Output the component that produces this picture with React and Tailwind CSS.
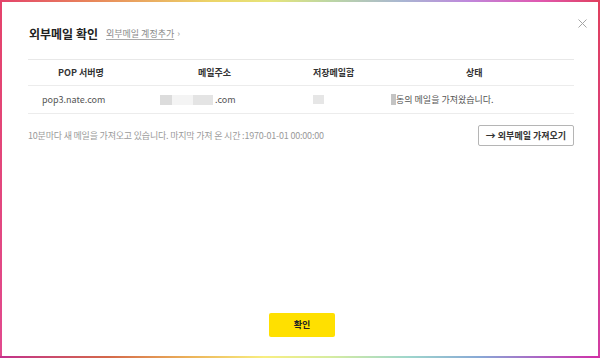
import React from "react";

export default function App() {
  const font = { fontFamily: '"Noto Sans CJK KR", "Noto Sans", sans-serif' };
  return (
    <div className="w-[600px] h-[358px] flex flex-col bg-white" style={font}>
      <div className="h-[2px] w-full bg-[linear-gradient(90deg,#e4436b_0%,#e8855a_15%,#ecd468_35%,#e6e47a_45%,#bcd6a4_55%,#a9b6d2_67%,#bf88dc_78%,#e058b0_90%,#e0405e_100%)]" />
      <div className="flex-1 flex min-h-0">
        <div className="w-[2px] bg-[linear-gradient(180deg,#e4436b,#e14a8e)]" />
        <div className="flex-1 relative flex flex-col pl-[26px] pr-[22px]">
          <button className="absolute right-[10px] top-[15px] w-[12px] h-[12px] flex items-center justify-center">
            <svg width="9" height="9" viewBox="0 0 9 9">
              <path d="M0.5 0.5 L8.5 8.5 M8.5 0.5 L0.5 8.5" stroke="#a5a5a5" strokeWidth="1" />
            </svg>
          </button>
          <div className="flex items-center pt-[21px]">
            <span className="h-[19px] text-[12px] font-bold text-[#222] leading-[19px] pl-[1px]">외부메일 확인</span>
            <span className="ml-[8px] text-[9px] text-[#8a8a8a] underline underline-offset-2 decoration-[#aaa] leading-[19px] mt-[1px]">외부메일 계정추가</span>
            <span className="ml-[3px] text-[9px] text-[#9a9a9a] leading-[19px]">›</span>
          </div>
          <div className="mt-[16px] border-t border-[#e8e8e8] grid grid-cols-[122px_140px_90px_194px] w-[546px]">
            <div className="h-[26px] flex items-center pl-[30px] text-[9px] font-bold text-[#333] border-b border-[#ececec]">POP 서버명</div>
            <div className="h-[26px] flex items-center pl-[48px] text-[9px] font-bold text-[#333] border-b border-[#ececec]">메일주소</div>
            <div className="h-[26px] flex items-center pl-[23px] text-[9px] font-bold text-[#333] border-b border-[#ececec]">저장메일함</div>
            <div className="h-[26px] flex items-center pl-[86px] text-[9px] font-bold text-[#333] border-b border-[#ececec]">상태</div>

            <div className="h-[28px] flex items-center pl-[14px] text-[9px] text-[#555] border-b border-[#ececec]">pop3.nate.com</div>
            <div className="h-[28px] flex items-center pl-[10px] text-[9px] text-[#555] border-b border-[#ececec]">
              <span className="w-[12px] h-[10px] bg-[#dcdcdc]" />
              <span className="w-[21px] h-[10px] bg-[#f4f4f4]" />
              <span className="w-[20px] h-[10px] bg-[#e4e4e4]" />
              <span className="ml-[2px]">.com</span>
            </div>
            <div className="h-[28px] flex items-center pl-[23px] border-b border-[#ececec]">
              <span className="w-[11px] h-[9px] bg-[#e6e6e6]" />
            </div>
            <div className="h-[28px] flex items-center pl-[11px] text-[9px] text-[#555] border-b border-[#ececec]">
              <span className="w-[5px] h-[11px] bg-[#c4c4c4]" />
              <span>동의 메일을 가져왔습니다.</span>
            </div>
          </div>
          <div className="mt-[11px] flex items-center justify-between w-[546px]">
            <span className="text-[9px] tracking-[-0.2px] text-[#9a9a9a]">10분마다 새 메일을 가져오고 있습니다. 마지막 가져 온 시간 :1970-01-01 00:00:00</span>
            <button className="h-[21px] w-[96px] border border-[#b5b5b5] rounded-[2px] flex items-center justify-center text-[9px] font-bold text-[#333] bg-white">
              <span className="mr-[2px] text-[10px] leading-none">→</span>
              외부메일 가져오기
            </button>
          </div>
          <div className="flex-1" />
          <div className="flex justify-center pb-[19px]">
            <button className="w-[66px] h-[24px] bg-[#ffe000] rounded-[2px] text-[9px] font-bold text-[#222]">확인</button>
          </div>
        </div>
        <div className="w-[2px] bg-[linear-gradient(180deg,#e0405e,#d23da4)]" />
      </div>
      <div className="h-[2px] w-full bg-[linear-gradient(90deg,#c2308c_0%,#d4684a_18%,#ecb45a_32%,#f8ee80_44%,#d6eca0_55%,#9ed6cc_68%,#88a8d6_80%,#ac64c4_90%,#d22ea6_100%)]" />
    </div>
  );
}
